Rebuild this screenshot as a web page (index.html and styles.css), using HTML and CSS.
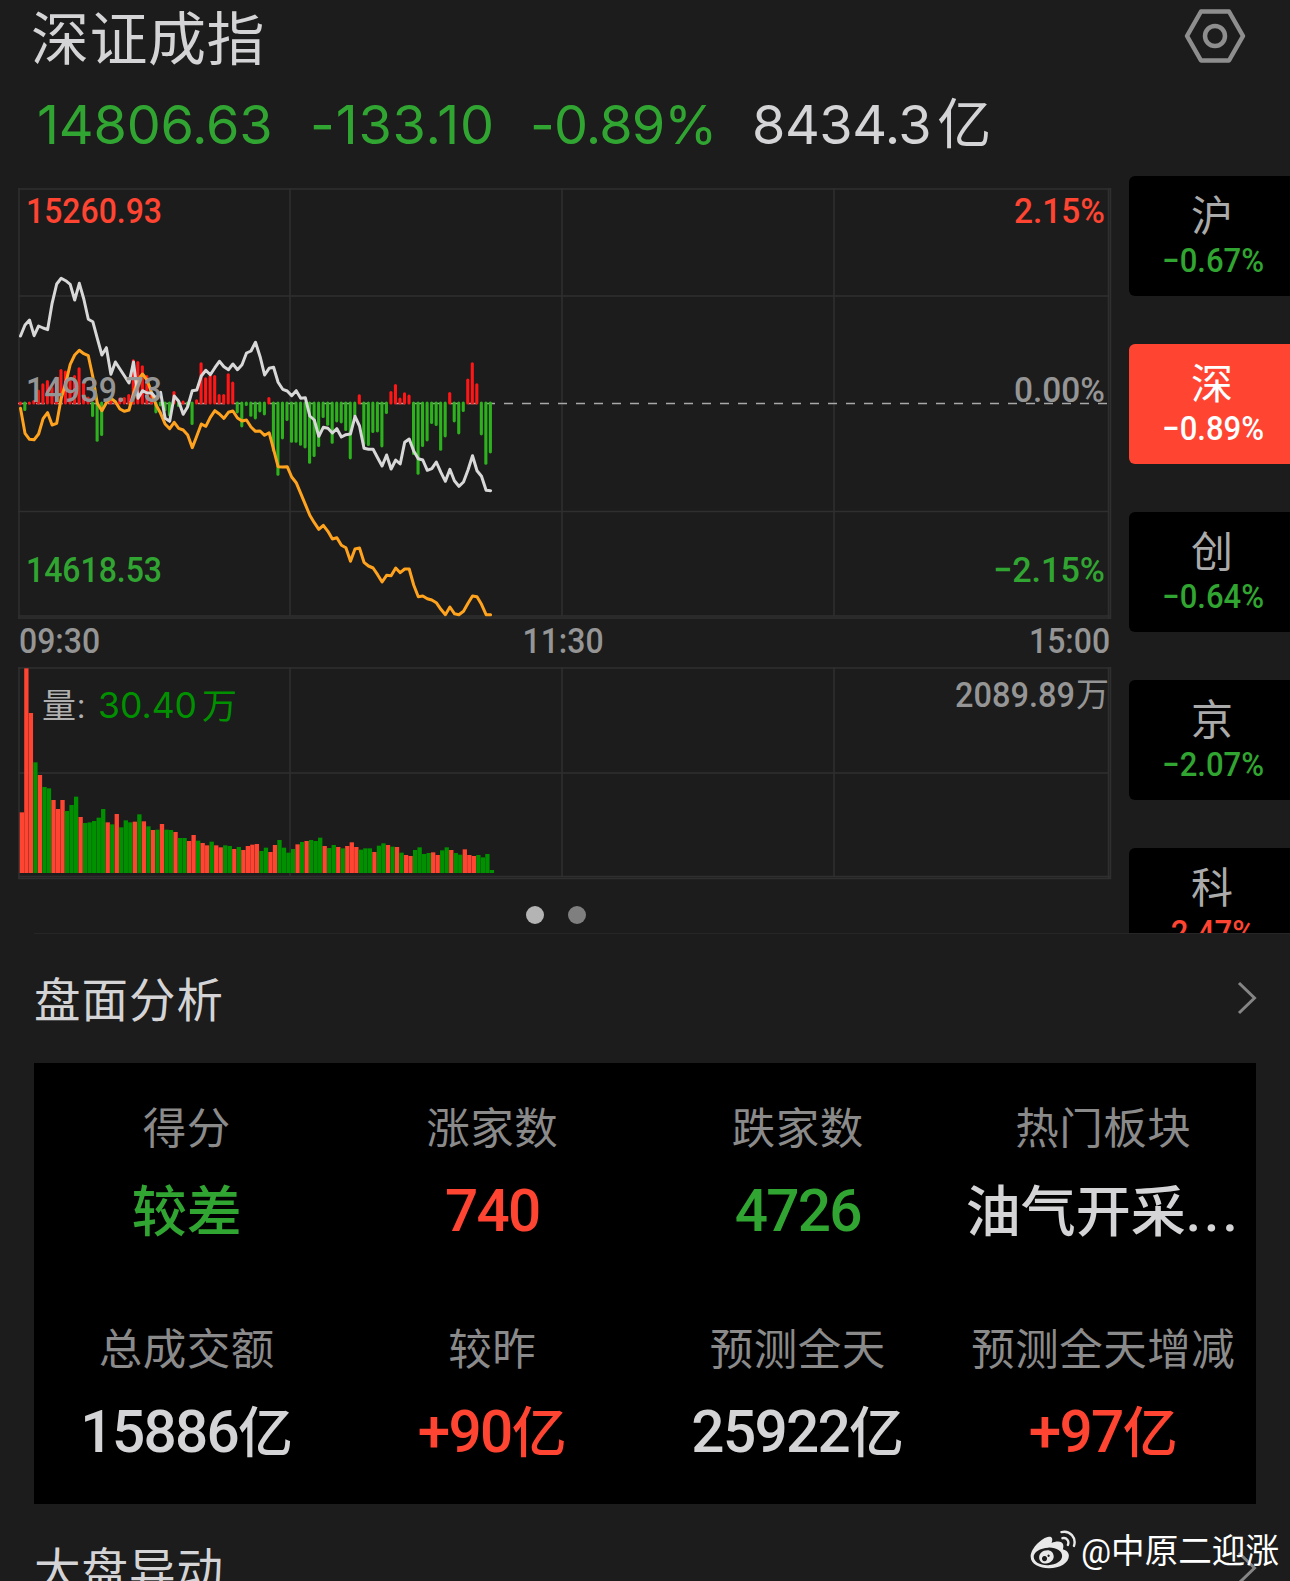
FILE: index.html
```html
<!DOCTYPE html>
<html lang="zh-CN">
<head>
    <meta charset="UTF-8">
    <meta name="viewport" content="width=device-width, initial-scale=1.0">
    <title>深证成指</title>
    <link rel="stylesheet" href="styles.css">
</head>
<body>

    <header class="header">
        <h1>深证成指</h1>
        <svg class="settings" viewBox="0 0 64 58">
            <path d="M18 4.500H46L60 29L46 53.500H18L4 29Z"/>
            <circle cx="32" cy="29" r="10"/>
        </svg>
    </header>

    <div class="quote">
        <span class="down q-price">14806.63</span>
        <span class="down q-change">-133.10</span>
        <span class="down q-percent">-0.89%</span>
        <span class="q-amount">8434.3<span class="unit">亿</span></span>
    </div>

    <main class="market">
        <section class="charts">
            <svg class="price-chart" viewBox="18 188 1094 432">
                <g class="grid">
                    <path d="M18 189H1111M18 296H1109M18 511.500H1109M18 616H1111M18 618H1111"/>
                    <path d="M19 188V619M290 188V616M562 188V616M834 188V616M1108.500 188V619M1110.500 188V619"/>
                </g>
                <path class="zero-line" d="M18 403.500H1107"/>
                <g id="momentum"></g>
                <polyline class="line-average" id="average"/>
                <polyline class="line-price" id="price"/>
                <g class="label">
                    <text class="up" x="26" y="222.500" textLength="136" lengthAdjust="spacingAndGlyphs">15260.93</text>
                    <text class="muted" x="26" y="402" textLength="136" lengthAdjust="spacingAndGlyphs">14939.73</text>
                    <text class="down" x="26" y="581.500" textLength="136" lengthAdjust="spacingAndGlyphs">14618.53</text>
                    <text class="up" x="1014" y="222.500" textLength="91" lengthAdjust="spacingAndGlyphs">2.15%</text>
                    <text class="muted" x="1014" y="402" textLength="91" lengthAdjust="spacingAndGlyphs">0.00%</text>
                    <text class="down" x="993" y="581.500" textLength="112" lengthAdjust="spacingAndGlyphs">−2.15%</text>
                </g>
            </svg>
            <div class="time-axis">
                <span>09:30</span>
                <span>11:30</span>
                <span>15:00</span>
            </div>
            <svg class="volume-chart" viewBox="18 667 1094 213">
                <g class="grid">
                    <path d="M18 668H1111M18 773H1109M18 876.500H1111M18 878.500H1111"/>
                    <path d="M19 667V879M290 667V876M562 667V876M834 667V876M1108.500 667V879M1110.500 667V879"/>
                </g>
                <g id="volume"></g>
                <text class="vol-name" x="42" y="718">量:</text>
                <text class="vol-value" x="98" y="718" textLength="99" lengthAdjust="spacingAndGlyphs">30.40</text>
                <text class="vol-value" x="202" y="718.500">万</text>
                <g class="label">
                    <text class="muted" x="955" y="706.500" textLength="120" lengthAdjust="spacingAndGlyphs">2089.89</text>
                    <text class="muted vol-unit" x="1076" y="706">万</text>
                </g>
            </svg>
            <div class="dots">
                <span class="dot active"></span>
                <span class="dot"></span>
            </div>
        </section>

        <nav class="indexes">
            <div class="index"><b>沪</b><span class="num down">−0.67%</span></div>
            <div class="index selected"><b>深</b><span class="num">−0.89%</span></div>
            <div class="index"><b>创</b><span class="num down">−0.64%</span></div>
            <div class="index"><b>京</b><span class="num down">−2.07%</span></div>
            <div class="index"><b>科</b><span class="num up">2.47%</span></div>
        </nav>
    </main>

    <section class="analysis">
        <div class="section-title">
            <h2>盘面分析</h2>
            <svg class="chevron" viewBox="0 0 20 34"><path d="M2 2L17.500 17L2 32"/></svg>
        </div>
        <div class="panel">
            <div class="cell"><span class="name">得分</span><span class="value down">较差</span></div>
            <div class="cell"><span class="name">涨家数</span><span class="value up"><span class="num">740</span></span></div>
            <div class="cell"><span class="name">跌家数</span><span class="value down"><span class="num">4726</span></span></div>
            <div class="cell"><span class="name">热门板块</span><span class="value">油气开采<span class="more">...</span></span></div>
            <div class="cell"><span class="name">总成交额</span><span class="value"><span class="num">15886</span>亿</span></div>
            <div class="cell"><span class="name">较昨</span><span class="value up"><span class="num">+90</span>亿</span></div>
            <div class="cell"><span class="name">预测全天</span><span class="value"><span class="num">25922</span>亿</span></div>
            <div class="cell"><span class="name">预测全天增减</span><span class="value up"><span class="num">+97</span>亿</span></div>
        </div>
    </section>

    <section class="moves">
        <div class="section-title">
            <h2>大盘异动</h2>
            <svg class="chevron" viewBox="0 0 20 34"><path d="M2 2L17.500 17L2 32"/></svg>
        </div>
    </section>

    <div class="watermark">
        <svg viewBox="16 22 136 115">
            <path class="ink" fill-rule="evenodd" d="M72 42C52 44 18 76 18 101C18 123 45 135 72 135C105 135 131 119 131 98C131 88 123 82 113 79C117 68 115 56 99 56C92 56 86 58 80 60C84 49 82 41 72 42ZM70 74C94 73 111 84 111 99C111 114 93 125 70 126C46 127 28 117 27 102C26 87 46 75 70 74Z"/>
            <path class="ink" fill-rule="evenodd" d="M68 82C52 82 43 92 43 103C43 114 52 121 63 121C77 121 87 110 86 99C85 88 77 82 68 82ZM59 99A7.500 7.500 0 1 1 58.900 99ZM71 94.500A3.500 3.500 0 1 1 70.900 94.500Z"/>
            <path class="wave" d="M109 28C134 22 154 44 146 69M112 46C124 43 133 54 128 66"/>
        </svg>
        <span>@中原二迎涨</span>
    </div>

    <script src="chart.js"></script>
</body>
</html>
```

FILE: styles.css
```css
* {
    box-sizing: border-box;
}
body {
    margin: 0;
    width: 1290px;
    height: 1581px;
    overflow: hidden;
    position: relative;
    background: #1c1c1c;
    color: #d4d4d6;
    font-family: Roboto, "Noto Sans CJK SC", sans-serif;
}
.up {
    color: #ff4432;
    fill: #ff4432;
}
.down {
    color: #31a531;
    fill: #31a531;
}
.muted {
    fill: #959595;
}
h1, h2 {
    margin: 0;
    font-weight: 400;
}

/* header */
.header {
    display: flex;
    justify-content: space-between;
    height: 76px;
    padding: 0 43px 0 31px;
}
h1 {
    font-size: 58px;
    line-height: 80px;
    letter-spacing: 0.5px;
}
.settings {
    width: 64px;
    height: 58px;
    margin-top: 7px;
    fill: none;
    stroke: #8e8e8e;
    stroke-width: 4.5;
    stroke-linejoin: round;
}
.quote {
    display: grid;
    grid-template-columns: 273px 220px 222px auto;
    height: 100px;
    padding-left: 37px;
    font-family: Inter, "Noto Sans CJK SC", sans-serif;
    font-size: 54px;
    line-height: 98px;
    white-space: nowrap;
}
.q-price {
    letter-spacing: -0.2px;
}
.q-change {
    letter-spacing: 0.8px;
}
.q-percent {
    letter-spacing: -0.9px;
}
.q-amount {
    letter-spacing: -0.5px;
}
.quote .unit {
    margin-left: 6px;
}

/* charts */
.market {
    display: flex;
    justify-content: space-between;
    height: 757px;
    padding-left: 18px;
    overflow: hidden;
}
.charts {
    width: 1094px;
    padding-top: 12px;
}
.charts svg {
    display: block;
    width: 1094px;
}
.price-chart {
    height: 432px;
}
.volume-chart {
    height: 213px;
}
.grid {
    stroke: #2f2f2f;
    stroke-width: 1.6;
}
.zero-line {
    stroke: #a8a8a8;
    stroke-width: 1.5;
    stroke-dasharray: 9 9;
}
.line-price, .line-average {
    fill: none;
    stroke-width: 3;
    stroke-linejoin: round;
    stroke-linecap: round;
}
.line-price {
    stroke: #d8d8d8;
}
.line-average {
    stroke: #ffa31e;
}
.bar {
    stroke-width: 3.1;
    stroke-linecap: round;
}
.bar-up {
    stroke: #ff1616;
}
.bar-down {
    stroke: #2db21e;
}
.vol-up {
    fill: #ff4432;
}
.vol-down {
    fill: #009000;
}
.label {
    font-size: 35.5px;
    font-weight: 500;
}
.vol-name {
    font-size: 34px;
    letter-spacing: 1px;
    fill: #b0b0b0;
}
.vol-value {
    font-family: Inter, "Noto Sans CJK SC", sans-serif;
    font-size: 35px;
    fill: #009000;
}
.vol-unit {
    font-size: 33px;
    font-weight: 400;
}
.time-axis {
    display: flex;
    justify-content: space-between;
    height: 47px;
    padding-left: 1px;
    font-size: 35.5px;
    font-weight: 500;
    line-height: 43px;
    color: #959595;
}
.time-axis span {
    transform: scaleX(0.9);
}
.time-axis span:first-child {
    transform-origin: left;
}
.time-axis span:last-child {
    transform-origin: right;
    margin-right: 2px;
}
.time-axis span:nth-child(2) {
    margin-right: 2px;
}
.dots {
    display: flex;
    justify-content: center;
    gap: 24px;
    padding-top: 26px;
    margin-right: 18px;
}
.dot {
    width: 18px;
    height: 18px;
    border-radius: 50%;
    background: #7f7f7f;
}
.dot.active {
    background: #b4b4b4;
}

/* index switcher on the right */
.indexes {
    display: flex;
    flex-direction: column;
    gap: 48px;
    width: 161px;
}
.index {
    flex: none;
    display: flex;
    flex-direction: column;
    align-items: center;
    width: 168px;
    height: 120px;
    border-radius: 6px;
    background: #000;
}
.index b {
    height: 64px;
    font-size: 42px;
    font-weight: 400;
    line-height: 82px;
    margin-right: 2px;
    color: #aaa;
}
.index .num {
    font-size: 33px;
    font-weight: 500;
    line-height: 41px;
    transform: scaleX(0.94);
}
.index.selected {
    background: #ff4432;
    color: #fff;
}
.index.selected b {
    color: #fff;
}

/* analysis */
.analysis {
    height: 571px;
    margin-left: 34px;
    border-top: 1px solid #262626;
}
.section-title {
    display: flex;
    justify-content: space-between;
    height: 129px;
    padding-right: 33px;
}
h2 {
    font-size: 46.5px;
    line-height: 134px;
    letter-spacing: 1px;
}
.chevron {
    width: 20px;
    height: 34px;
    margin-top: 47px;
    fill: none;
    stroke: #858585;
    stroke-width: 3;
}
.panel {
    display: grid;
    grid-template-columns: repeat(4, 1fr);
    grid-template-rows: 221px 220px;
    width: 1222px;
    background: #000;
}
.cell {
    display: flex;
    flex-direction: column;
    align-items: center;
    padding-top: 37px;
    white-space: nowrap;
}
.name {
    height: 60px;
    font-size: 43.5px;
    line-height: 60px;
    letter-spacing: 0.5px;
    color: #8a8a8a;
}
.value {
    display: flex;
    height: 104px;
    font-size: 55px;
    font-weight: 500;
    line-height: 104px;
}
.value .num {
    font-size: 58.5px;
    letter-spacing: -1.7px;
    line-height: 103px;
}
.more {
    letter-spacing: 3px;
}
.moves .section-title {
    padding-left: 34px;
}

.watermark {
    position: absolute;
    right: 11px;
    bottom: 6px;
    display: flex;
    align-items: center;
    gap: 5px;
    font-size: 33.6px;
    line-height: 46px;
    color: #fff;
}
.watermark svg {
    width: 46px;
    height: 39px;
    margin-bottom: 5px;
}
.ink {
    fill: #e8e8e8;
}
.wave {
    fill: none;
    stroke: #e8e8e8;
    stroke-width: 7;
    stroke-linecap: round;
}
```

FILE: chart.js
```javascript
const SVG_NS = 'http://www.w3.org/2000/svg';
const STEP = 4.52;
const ZERO_Y = 403;
const VOLUME_BASE = 873;

// offsets from the previous close, one per minute, 3 units to a pixel
const price = [
    -201, -234, -249, -202, -231, -225, -220, -299, -357, -374, -367, -356, -309, -359, -312,
    -251, -244, -194, -144, -166, -86, -123, -102, -81, -60, -123, -14, -37, -30, -30,
    -14, -32, 46, 55, -21, -5, 34, 11, -37, -39, -81, -98, -85, -106, -125,
    -109, -100, -117, -100, -115, -150, -156, -182, -139, -84, -104, -107, -62, -41, -36,
    -22, -37, -14, -16, 39, 51, 100, 73, 76, 90, 77, 102, 95, 93, 40,
    69, 136, 139, 139, 164, 189, 156, 198, 171, 183, 118, 108, 144, 167, 171,
    202, 197, 177, 208, 235, 199, 233, 250, 237, 201, 158, 203, 220, 262, 263
];

const average = [
    16, 91, 109, 110, 93, 47, 29, 66, 61, -14, -59, -116, -144, -158, -148,
    -142, -79, 1, 23, -1, -14, -4, 18, 25, 21, -29, -69, -87, -69, -31,
    6, 31, 63, 77, 58, 76, 81, 96, 134, 99, 63, 70, 43, 23, 33,
    46, 28, 24, 45, 54, 51, 72, 85, 84, 97, 89, 139, 191, 192, 191,
    222, 239, 271, 304, 337, 359, 379, 367, 385, 408, 404, 427, 434, 475, 438,
    435, 478, 489, 495, 515, 537, 517, 518, 495, 509, 498, 498, 546, 581, 579,
    587, 591, 599, 619, 635, 612, 632, 635, 625, 601, 579, 581, 604, 635, 635
];

const momentum = [
    2, -24, 4, 9, 40, 59, 69, 50, 79, 102, 97, 72, 84, 107, 62,
    19, -42, -116, -99, 5, 12, 8, 16, 18, 27, 131, 126, 113, 84, 29,
    -31, -10, -25, -40, 36, -12, 7, -10, -66, 11, 122, 77, 84, 84, 27,
    27, 89, 64, -31, -73, -9, -41, -49, -28, -37, 18, -146, -218, -109, -54,
    -119, -119, -128, -136, -182, -162, -132, -45, -68, -122, -58, -61, -84, -169, -41,
    26, -126, -129, -90, -88, -133, -33, 36, 57, 16, 32, 25, -156, -215, -132,
    -115, -63, -69, -143, -103, 33, -58, -94, -27, 73, 122, 59, -97, -185, -151
];

// positive = red bar, negative = green bar
const volume = [
    182, 614, 480, -332, 294, -258, -254, 219, 192, 219, -186, -204, -229, 168, -150,
    -152, -156, -166, -192, 152, -146, 177, -137, -158, -152, 154, -176, 155, -140, 129,
    -130, 147, -130, -129, 123, -105, -105, 96, 114, -97, 90, 83, -94, 83, 77,
    -83, -81, 72, -78, 69, 81, 85, 87, -66, -76, 63, 84, -99, -76, -61,
    -72, 86, -93, 96, -99, -96, -106, 81, -75, -84, 78, -74, 81, 92, 78,
    -70, -74, -74, 63, -82, -89, 84, -79, 78, -61, 54, 51, -69, -77, -57,
    -60, 62, 54, -68, -77, 69, -60, -55, 71, 54, 51, -54, -47, -57, -9
];

function add(parent, name, attrs) {
    const el = document.createElementNS(SVG_NS, name);
    for (const key in attrs) {
        el.setAttribute(key, attrs[key]);
    }
    document.getElementById(parent).appendChild(el);
}

function points(values) {
    return values.map((v, i) => `${(20.5 + i * STEP).toFixed(1)},${(ZERO_Y + v / 3).toFixed(1)}`).join(' ');
}

momentum.forEach((v, i) => {
    const x = 20.3 + i * STEP;
    const end = v > 0 ? ZERO_Y - v / 3 + 1.5 : ZERO_Y - v / 3 - 1.5;
    add('momentum', 'line', {
        class: v > 0 ? 'bar bar-up' : 'bar bar-down',
        x1: x, x2: x, y1: ZERO_Y, y2: end
    });
});

volume.forEach((v, i) => {
    const h = Math.abs(v) / 3;
    add('volume', 'rect', {
        class: v > 0 ? 'vol-up' : 'vol-down',
        x: 19.7 + i * STEP, y: VOLUME_BASE - h, width: STEP - 0.2, height: h
    });
});

document.getElementById('price').setAttribute('points', points(price));
document.getElementById('average').setAttribute('points', points(average));
```
